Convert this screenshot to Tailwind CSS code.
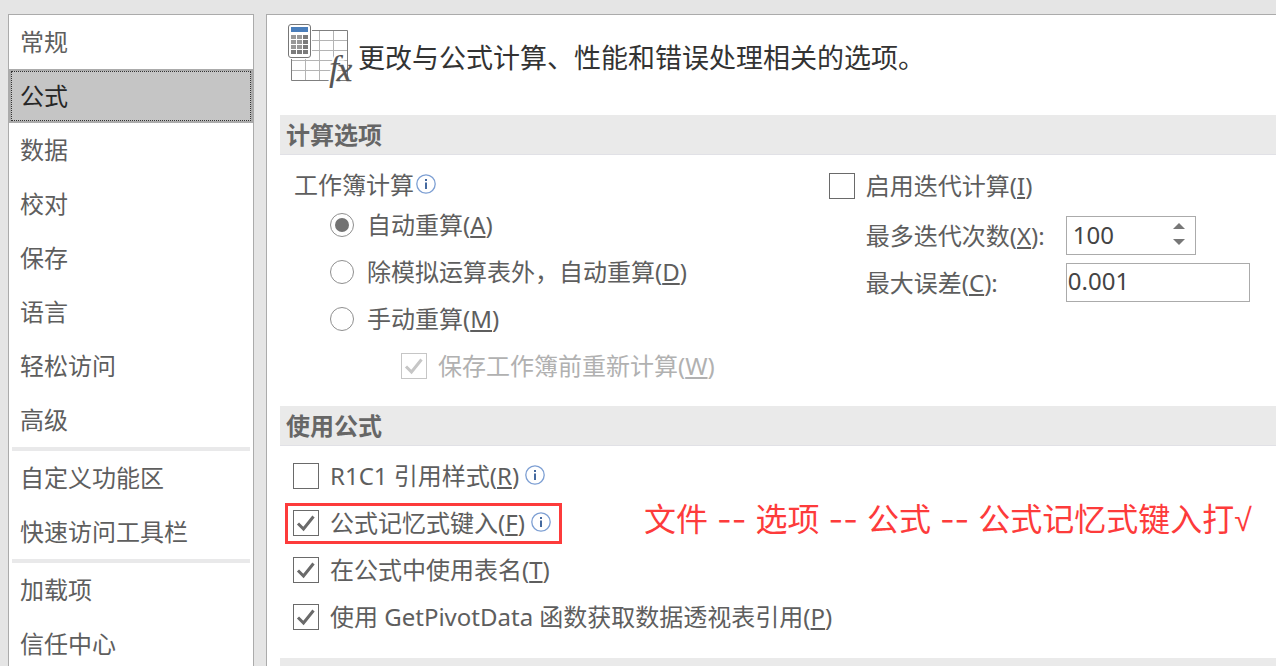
<!DOCTYPE html>
<html lang="zh-CN">
<head>
    <meta charset="UTF-8">
    <meta name="viewport" content="width=device-width, initial-scale=1.0">
    <title>选项</title>
    <script src="https://cdn.jsdelivr.net/npm/@tailwindcss/browser@4"></script>
</head>
<body class="bg-[#e5e5e5] h-screen overflow-hidden pt-[14px] pl-2 flex gap-3 font-['Noto_Sans','Noto_Sans_CJK_SC',sans-serif] text-2xl leading-8 text-[#5e5e5e]">
    <!-- Categories -->
    <nav class="w-[246px] shrink-0 bg-white border border-b-0 border-[#ababab] flex flex-col">
        <a href="#general" class="h-[54px] shrink-0 px-[11px] flex items-center">常规</a>
        <a href="#formulas" class="h-[54px] shrink-0 bg-[#ababab] p-0.5 flex text-[#262626]" aria-current="page">
            <span class="flex-1 bg-[#c5c5c5] border border-dotted border-[#333333] px-2 flex items-center">公式</span>
        </a>
        <a href="#data" class="h-[54px] shrink-0 px-[11px] flex items-center">数据</a>
        <a href="#proofing" class="h-[54px] shrink-0 px-[11px] flex items-center">校对</a>
        <a href="#save" class="h-[54px] shrink-0 px-[11px] flex items-center">保存</a>
        <a href="#language" class="h-[54px] shrink-0 px-[11px] flex items-center">语言</a>
        <a href="#access" class="h-[54px] shrink-0 px-[11px] flex items-center">轻松访问</a>
        <a href="#advanced" class="h-[54px] shrink-0 px-[11px] flex items-center">高级</a>
        <hr class="h-1 shrink-0 mx-[3px] border-0 bg-[#e9e9ea]">
        <a href="#ribbon" class="h-[54px] shrink-0 px-[11px] flex items-center">自定义功能区</a>
        <a href="#toolbar" class="h-[54px] shrink-0 px-[11px] flex items-center">快速访问工具栏</a>
        <hr class="h-1 shrink-0 mx-[3px] border-0 bg-[#e9e9ea]">
        <a href="#addins" class="h-[54px] shrink-0 px-[11px] flex items-center">加载项</a>
        <a href="#trust" class="h-[54px] shrink-0 px-[11px] flex items-center">信任中心</a>
    </nav>

    <main class="flex-1 min-w-0 bg-white border-t border-l border-[#ababab] pl-[13px]">
        <header class="h-[100px] pt-[9px] pl-2 flex items-start gap-1.5">
            <svg class="w-16 h-16 shrink-0 overflow-visible" viewBox="0 0 64 64" fill="none" aria-hidden="true">
                <path d="M24 16.5h35M24 26.5h35M4 36.5h55M4 46.5h55M17.5 35v21M31.5 7v49M45.5 7v49" stroke="#b4b4b4"/>
                <path d="M24 6.5h35.500v50H3.500V35" stroke="#7f7f7f"/>
                <rect x="0.500" y="0.500" width="22" height="33" rx="2.500" fill="#fff" stroke="#777"/>
                <path d="M3 3h17v5H3z" fill="#4a7ebb"/>
                <path d="M3 11h5v4H3zM9 11h5v4H9zM3 16h5v4H3zM9 16h5v4H9zM3 21h5v4H3zM9 21h5v4H9z" fill="#999"/>
                <path d="M15 11h5v4h-5zM15 16h5v4h-5zM15 21h5v4h-5zM3 26h5v4H3zM9 26h5v4H9zM15 26h5v4h-5z" fill="#7b7b7b"/>
                <text x="41" y="56" font-family="Liberation Serif, serif" font-style="italic" font-size="36" fill="#555" stroke="#fff" stroke-width="4" paint-order="stroke">f</text>
                <text x="49" y="57" font-family="Liberation Serif, serif" font-style="italic" font-size="34" fill="#555" stroke="#555" stroke-width="0.500">x</text>
            </svg>
            <h1 class="h-16 pt-1 flex items-center text-[27px] text-[#333333]">更改与公式计算、性能和错误处理相关的选项。</h1>
        </header>

        <section>
            <h2 class="h-10 bg-[#eaeaea] border-b border-[#e1e1e6] pl-1.5 flex items-center font-bold text-[#666666]">计算选项</h2>
            <div class="grid grid-cols-[55fr_45fr] pb-[17px]">
                <div class="pt-1.5" role="group" aria-labelledby="calcTitle">
                    <div class="h-10 pl-[14px] pt-2 flex items-center gap-0.5">
                        <span id="calcTitle">工作簿计算</span>
                        <svg class="size-5 mb-0.5" viewBox="0 0 20 20" fill="none" aria-hidden="true">
                            <circle cx="10" cy="10" r="9.200" stroke="#7d9fd3" stroke-width="1.300"/>
                            <path d="M9 5h2v2H9zM9 8.500h2V15H9z" fill="#44699f"/>
                        </svg>
                    </div>
                    <label class="h-[47px] pl-[50px] flex items-center gap-[13px]">
                        <input type="radio" name="calc" checked class="appearance-none size-6 rounded-full border border-[#8f8f8f] bg-white bg-clip-content p-1 checked:bg-[#737373]">
                        <span>自动重算(<u class="underline-offset-2">A</u>)</span>
                    </label>
                    <label class="h-[47px] pl-[50px] flex items-center gap-[13px]">
                        <input type="radio" name="calc" class="appearance-none size-6 rounded-full border border-[#8f8f8f] bg-white bg-clip-content p-1 checked:bg-[#737373]">
                        <span>除模拟运算表外，自动重算(<u class="underline-offset-2">D</u>)</span>
                    </label>
                    <label class="h-[47px] pl-[50px] flex items-center gap-[13px]">
                        <input type="radio" name="calc" class="appearance-none size-6 rounded-full border border-[#8f8f8f] bg-white bg-clip-content p-1 checked:bg-[#737373]">
                        <span>手动重算(<u class="underline-offset-2">M</u>)</span>
                    </label>
                    <label class="h-[47px] pl-[121px] flex items-center gap-[11px] text-[#b1b1b1]">
                        <span class="grid">
                            <input type="checkbox" checked disabled class="peer col-start-1 row-start-1 appearance-none size-[26px] border border-[#c6c6c6]">
                            <svg class="col-start-1 row-start-1 size-[26px] pointer-events-none invisible peer-checked:visible" viewBox="0 0 26 26" fill="none" aria-hidden="true">
                                <path d="M5 13.500l5.500 5.500L20.500 6.500" stroke="#c6c6c6" stroke-width="3"/>
                            </svg>
                        </span>
                        <span>保存工作簿前重新计算(<u class="underline-offset-2">W</u>)</span>
                    </label>
                </div>

                <div class="pt-[5px] pl-px">
                    <label class="h-[52px] flex items-center gap-[11px]">
                        <input type="checkbox" class="appearance-none size-[26px] border border-[#6a6a6a]">
                        <span>启用迭代计算(<u class="underline-offset-2">I</u>)</span>
                    </label>
                    <div class="h-[47px] pl-[37px] flex items-center">
                        <label for="maxIterations" class="w-[200px]">最多迭代次数(<u class="underline-offset-2">X</u>):</label>
                        <div class="w-[130px] h-[39px] border border-[#ababab] flex">
                            <input type="text" id="maxIterations" value="100" class="flex-1 min-w-0 pl-1.5 pb-0.5 text-[#444444] outline-none">
                            <div class="w-8 flex flex-col justify-center gap-1.5">
                                <button type="button" id="stepUp" class="h-2.5 flex items-start justify-center" aria-label="增加">
                                    <svg class="w-3 h-1.5" viewBox="0 0 12 6" aria-hidden="true"><path d="M6 0l6 6H0z" fill="#777"/></svg>
                                </button>
                                <button type="button" id="stepDown" class="h-2.5 flex items-start justify-center" aria-label="减少">
                                    <svg class="w-3 h-1.5" viewBox="0 0 12 6" aria-hidden="true"><path d="M6 6l6-6H0z" fill="#777"/></svg>
                                </button>
                            </div>
                        </div>
                    </div>
                    <div class="h-[47px] pl-[37px] flex items-center">
                        <label for="maxChange" class="w-[200px]">最大误差(<u class="underline-offset-2">C</u>):</label>
                        <input type="text" id="maxChange" value="0.001" class="w-[184px] h-[39px] border border-[#ababab] pl-px pb-1 text-[#444444] outline-none">
                    </div>
                </div>
            </div>
        </section>

        <section>
            <h2 class="h-10 bg-[#eaeaea] border-b border-[#e1e1e6] pl-1.5 flex items-center font-bold text-[#666666]">使用公式</h2>
            <div class="pt-1.5 pb-[18px] pl-[13px]">
                <label class="h-[47px] flex items-center gap-[11px]">
                    <input type="checkbox" class="appearance-none size-[26px] border border-[#6a6a6a]">
                    <span class="flex items-center gap-1.5">
                        <span>R1C1 引用样式(<u class="underline-offset-2">R</u>)</span>
                        <svg class="size-5 mb-0.5" viewBox="0 0 20 20" fill="none" aria-hidden="true">
                            <circle cx="10" cy="10" r="9.200" stroke="#7d9fd3" stroke-width="1.300"/>
                            <path d="M9 5h2v2H9zM9 8.500h2V15H9z" fill="#44699f"/>
                        </svg>
                    </span>
                </label>
                <div class="relative h-[47px] flex items-center">
                    <label class="relative flex items-center gap-[11px]">
                        <span class="grid">
                            <input type="checkbox" checked class="peer col-start-1 row-start-1 appearance-none size-[26px] border border-[#6a6a6a]">
                            <svg class="col-start-1 row-start-1 size-[26px] pointer-events-none invisible peer-checked:visible" viewBox="0 0 26 26" fill="none" aria-hidden="true">
                                <path d="M5 13.500l5.500 5.500L20.500 6.500" stroke="#6a6a6a" stroke-width="3"/>
                            </svg>
                        </span>
                        <span class="flex items-center gap-1.5">
                            <span>公式记忆式键入(<u class="underline-offset-2">F</u>)</span>
                            <svg class="size-5 mb-0.5" viewBox="0 0 20 20" fill="none" aria-hidden="true">
                                <circle cx="10" cy="10" r="9.200" stroke="#7d9fd3" stroke-width="1.300"/>
                                <path d="M9 5h2v2H9zM9 8.500h2V15H9z" fill="#44699f"/>
                            </svg>
                        </span>
                        <!-- Highlight around the option -->
                        <span class="absolute -left-2 -right-[11px] -top-1 -bottom-[5px] border-3 border-[#fd3b3b] pointer-events-none"></span>
                    </label>
                    <p class="absolute left-[351px] -top-[3px] h-[47px] flex items-center whitespace-nowrap font-['Inter','Noto_Sans_CJK_SC',sans-serif] text-[32px] text-[#fd3b3b]">文件 -- 选项 -- 公式 -- 公式记忆式键入打<span class="font-['Liberation_Sans']">√</span></p>
                </div>
                <label class="h-[47px] flex items-center gap-[11px]">
                    <span class="grid">
                        <input type="checkbox" checked class="peer col-start-1 row-start-1 appearance-none size-[26px] border border-[#6a6a6a]">
                        <svg class="col-start-1 row-start-1 size-[26px] pointer-events-none invisible peer-checked:visible" viewBox="0 0 26 26" fill="none" aria-hidden="true">
                            <path d="M5 13.500l5.500 5.500L20.500 6.500" stroke="#6a6a6a" stroke-width="3"/>
                        </svg>
                    </span>
                    <span>在公式中使用表名(<u class="underline-offset-2">T</u>)</span>
                </label>
                <label class="h-[47px] flex items-center gap-[11px]">
                    <span class="grid">
                        <input type="checkbox" checked class="peer col-start-1 row-start-1 appearance-none size-[26px] border border-[#6a6a6a]">
                        <svg class="col-start-1 row-start-1 size-[26px] pointer-events-none invisible peer-checked:visible" viewBox="0 0 26 26" fill="none" aria-hidden="true">
                            <path d="M5 13.500l5.500 5.500L20.500 6.500" stroke="#6a6a6a" stroke-width="3"/>
                        </svg>
                    </span>
                    <span>使用 GetPivotData 函数获取数据透视表引用(<u class="underline-offset-2">P</u>)</span>
                </label>
            </div>
        </section>

        <div class="h-10 bg-[#eaeaea]"></div>
    </main>

    <script>
        const iterations = document.getElementById('maxIterations');

        function step(amount) {
            iterations.value = Math.max(1, Number(iterations.value) + amount);
        }

        document.getElementById('stepUp').addEventListener('click', () => step(1));
        document.getElementById('stepDown').addEventListener('click', () => step(-1));
    </script>
</body>
</html>
